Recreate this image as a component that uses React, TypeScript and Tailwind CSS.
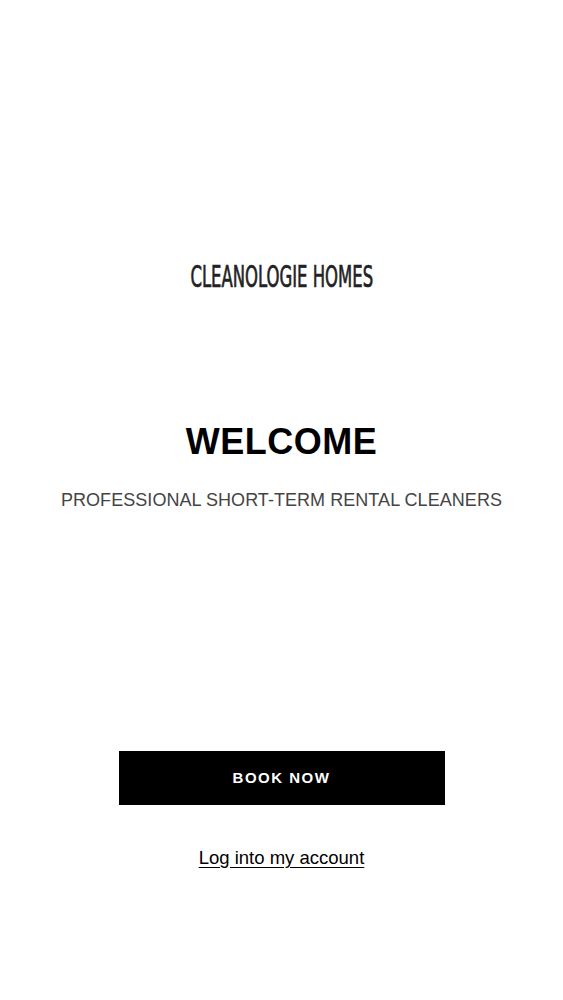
export default function App() {
  return (
    <div className="min-h-screen w-full bg-white flex flex-col items-center font-['Liberation_Sans',Arial,sans-serif]">
      {/* Logo */}
      <div className="mt-[255px] h-[44px] flex items-center justify-center">
        <span className="inline-block text-[30px] leading-none text-[#222] font-['DejaVu_Sans_Condensed',sans-serif] [-webkit-text-stroke:0.7px_#222] scale-x-[0.61] whitespace-nowrap">
          CLEANOLOGIE HOMES
        </span>
      </div>

      {/* Heading */}
      <h1 className="mt-[125px] text-[36px] leading-none font-bold text-black tracking-[0.5px]">
        WELCOME
      </h1>
      <p className="mt-[31px] text-[18px] leading-none text-[#444] tracking-[0.05px] whitespace-nowrap">
        PROFESSIONAL SHORT-TERM RENTAL CLEANERS
      </p>

      {/* Actions */}
      <button className="mt-[242px] w-[326px] h-[54px] bg-black text-white text-[15px] font-bold tracking-[1.5px] flex items-center justify-center">
        BOOK NOW
      </button>
      <a href="#" className="mt-[44px] text-[18.5px] leading-none text-black underline underline-offset-[3px]">
        Log into my account
      </a>
    </div>
  )
}
